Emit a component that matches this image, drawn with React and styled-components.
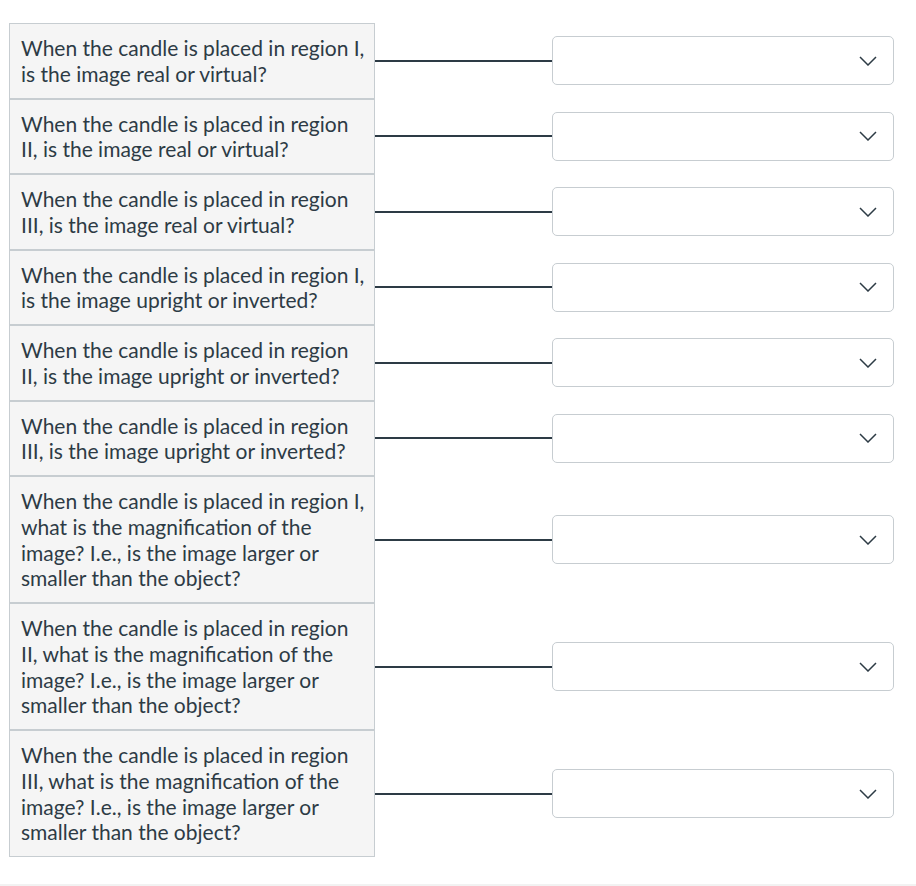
import React from "react";
import styled, { createGlobalStyle } from "styled-components";

const Global = createGlobalStyle`
  html, body { margin: 0; padding: 0; background: #fff; }
  body { font-family: Lato, "Noto Sans", sans-serif; color: #2d3b45; }
`;

const Page = styled.div`
  width: 916px;
  height: 886px;
  box-sizing: border-box;
  padding: 23px 22px 0 9px;
  display: flex;
  flex-direction: column;
  border-bottom: 2px solid #f2f2f2;
`;

const List = styled.div`
  display: flex;
  flex-direction: column;
`;

const Row = styled.div`
  display: flex;
  align-items: center;
`;

const Question = styled.div`
  width: 366px;
  box-sizing: border-box;
  background: #f5f5f5;
  border: 1px solid #c7cdd1;
  padding: 11px 8px 11px 11px;
  font-size: 21px;
  line-height: 25.75px;
  color: #2d3b45;
  align-self: stretch;
`;

const Connector = styled.div`
  width: 177px;
  height: 2px;
  background: #2d3b45;
`;

const Select = styled.div`
  width: 342px;
  height: 49px;
  box-sizing: border-box;
  border: 1px solid #c7cdd1;
  border-radius: 5px;
  background: #fff;
  display: flex;
  align-items: center;
  justify-content: flex-end;
  padding-right: 16px;
`;

const Chevron = () => (
  <svg width="18" height="10" viewBox="0 0 18 10" fill="none">
    <path d="M1 1 L9 9 L17 1" stroke="#2d3b45" strokeWidth="1.5" />
  </svg>
);

const questions = [
  "When the candle is placed in region I, is the image real or virtual?",
  "When the candle is placed in region II, is the image real or virtual?",
  "When the candle is placed in region III, is the image real or virtual?",
  "When the candle is placed in region I, is the image upright or inverted?",
  "When the candle is placed in region II, is the image upright or inverted?",
  "When the candle is placed in region III, is the image upright or inverted?",
  "When the candle is placed in region I, what is the magnification of the image? I.e., is the image larger or smaller than the object?",
  "When the candle is placed in region II, what is the magnification of the image? I.e., is the image larger or smaller than the object?",
  "When the candle is placed in region III, what is the magnification of the image? I.e., is the image larger or smaller than the object?",
];

export default function App() {
  return (
    <>
      <Global />
      <Page>
        <List>
          {questions.map((q, i) => (
            <Row key={i}>
              <Question>{q}</Question>
              <Connector />
              <Select>
                <Chevron />
              </Select>
            </Row>
          ))}
        </List>
      </Page>
    </>
  );
}
